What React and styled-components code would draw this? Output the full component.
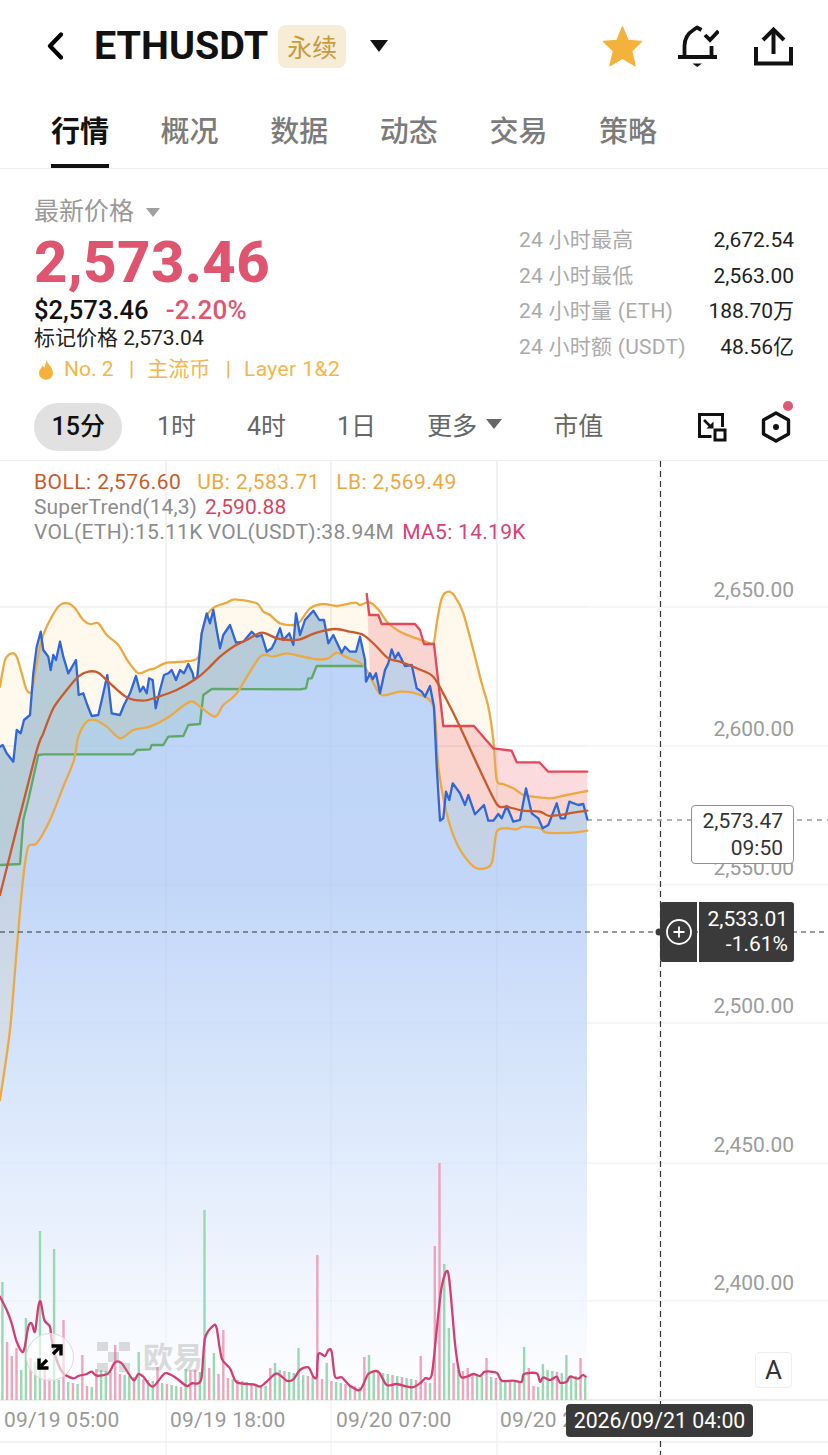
import React from 'react';
import styled, { createGlobalStyle } from 'styled-components';

const CHART_TOP = 461;

const Global = createGlobalStyle`
  html, body { margin: 0; padding: 0; background: #fff; }
  body { font-family: Roboto, "Noto Sans CJK SC", sans-serif; color: #111; }
`;

const Page = styled.div`
  width: 828px; height: 1455px; display: flex; flex-direction: column; overflow: hidden; background: #fff;
`;
const Header = styled.header`
  height: 92px; display: flex; align-items: center; padding: 0 35px 0 47px; box-sizing: border-box;
`;
const Back = styled.svg`width: 16px; height: 28px; margin-right: 31px; flex: none;`;
const Title = styled.h1`margin: 0; font-size: 39.5px; font-weight: 700; letter-spacing: 0; line-height: 1;`;
const Badge = styled.span`
  margin-left: 10px; width: 68px; height: 43px; border-radius: 8px; background: #f7ecd6; color: #c99a3e;
  font-size: 25px; display: flex; align-items: center; justify-content: center;
`;
const Caret = styled.span`
  display: block; width: 0; height: 0; flex: none;
  border-left: ${p => p.$w}px solid transparent; border-right: ${p => p.$w}px solid transparent;
  border-top: ${p => p.$h}px solid ${p => p.$c};
`;
const TitleCaret = styled(Caret)`margin-left: 24px;`;
const HeaderActions = styled.div`margin-left: auto; display: flex; align-items: center; gap: 35px;`;
const TabBar = styled.nav`
  height: 77px; box-sizing: border-box; display: flex; gap: 51.6px; padding-left: 51px; border-bottom: 1px solid #eeeeee;
`;
const Tab = styled.div`
  height: 76px; box-sizing: border-box; font-size: 29px; line-height: 76px; font-weight: ${p => p.$active ? 700 : 500};
  color: ${p => p.$active ? '#111' : '#7b7b7b'}; width: 58px; white-space: nowrap;
  border-bottom: 4px solid ${p => p.$active ? '#111' : 'transparent'};
  & > span { display: block; transform: translateY(2px); }
`;
const Summary = styled.section`
  height: 233px; box-sizing: border-box; display: flex; justify-content: space-between; padding: 28px 34px 0 34px;
`;
const PriceCol = styled.div`display: flex; flex-direction: column;`;
const LastLabel = styled.div`
  display: flex; align-items: center; gap: 12px; font-size: 25px; line-height: 30px; color: #999;
`;
const BigPrice = styled.div`
  font-size: 58px; font-weight: 800; line-height: 66px; color: #df5570; margin-top: 2px; letter-spacing: 0.4px;
`;
const FiatRow = styled.div`display: flex; gap: 17px; font-size: 25.6px; line-height: 30px; font-weight: 500; color: #111;`;
const Change = styled.span`color: #df5570; font-size: 26px; letter-spacing: 0.3px;`;
const Mark = styled.div`font-size: 21px; line-height: 28px; color: #222; margin-top: -1px;`;
const TagRow = styled.div`
  display: flex; align-items: center; font-size: 21px; line-height: 28px; color: #f2b64c; margin-top: 3px; padding-left: 4px;
`;
const Flame = styled.svg`width: 16px; height: 21px; margin-right: 10px; flex: none;`;
const Sep = styled.span`margin: 0 13px 0 15.5px; font-weight: 500;`;
const LayerText = styled.span`letter-spacing: 0.4px;`;
const Stats = styled.div`width: 275px; display: flex; flex-direction: column; margin-top: 26px;`;
const StatRow = styled.div`
  display: flex; justify-content: space-between; height: 35.7px; line-height: 35.7px; font-size: 21px;
`;
const StatKey = styled.span`color: #aaaaaa; letter-spacing: 0.25px;`;
const StatVal = styled.span`color: #222;`;
const Toolbar = styled.div`
  height: 58px; box-sizing: border-box; padding: 1px 34px 9px; display: flex; align-items: center; gap: 18px;
`;
const Interval = styled.div`
  height: 48px; box-sizing: border-box; padding: 0 ${p => p.$active ? 17.5 : 16.5}px 6px; border-radius: 24px; font-size: 25px;
  background: ${p => p.$active ? '#e1e1e1' : 'transparent'};
  color: ${p => p.$active ? '#111' : '#666'};
  font-weight: ${p => p.$active ? 500 : 400};
  display: flex; align-items: center; gap: 9px; white-space: nowrap;
`;
const ToolIcons = styled.div`margin-left: auto; margin-right: 3px; display: flex; align-items: center; gap: 34px; position: relative;`;
const RedDot = styled.span`
  position: absolute; width: 10px; height: 10px; border-radius: 50%; background: #dc5a75; right: -2px; top: -10px;
`;
const Chart = styled.div`
  flex: 1; position: relative; overflow: hidden; border-top: 1px solid #eeeeee; box-sizing: border-box;
`;
const ChartSvg = styled.svg`position: absolute; left: 0; top: 0; display: block;`;
const Legend = styled.div`
  position: absolute; left: 34px; top: ${482 - CHART_TOP - 12}px; font-size: 21px; line-height: 25px; color: #8c8c8c; white-space: nowrap;
`;
const LegendRow = styled.div`display: flex; gap: ${p => p.$gap}px; letter-spacing: ${p => p.$ls}px;`;
const Val = styled.span`color: ${p => p.$c}; margin-left: ${p => p.$ml || 0}px;`;
const AxisLabel = styled.div`
  position: absolute; right: 34px; top: ${p => p.$y - CHART_TOP - 13}px; font-size: 21px; line-height: 26px; color: #9b9b9b;
`;
const DateLabel = styled.div`
  position: absolute; left: ${p => p.$x}px; top: ${1420 - CHART_TOP - 13}px; font-size: 21px; line-height: 26px; color: #999; white-space: nowrap; letter-spacing: 0.2px;
`;
const PriceTag = styled.div`
  position: absolute; left: 691px; top: ${805 - CHART_TOP}px; width: 103px; height: 59px; box-sizing: border-box;
  border: 1px solid #8f8f8f; border-radius: 4px; background: #fff; font-size: 21px; line-height: 27px;
  color: #333; text-align: right; padding: 2px 10px 0 0;
`;
const CrossTag = styled.div`
  position: absolute; left: 660px; top: ${902 - CHART_TOP}px; width: 134px; height: 60px; display: flex; gap: 2px;
`;
const CrossBtn = styled.div`
  width: 37px; background: #3a3a3a; border-radius: 3px 0 0 3px; display: flex; align-items: center; justify-content: center;
`;
const CrossText = styled.div`
  flex: 1; background: #3a3a3a; border-radius: 0 3px 3px 0; color: #fff; font-size: 21px; line-height: 25px;
  text-align: right; padding: 5px 6px 0 0; box-sizing: border-box;
`;
const TimeTag = styled.div`
  position: absolute; left: 566px; top: ${1404 - CHART_TOP}px; width: 187px; height: 33px; background: #3a3a3a; border-radius: 4px;
  color: #fff; font-size: 21.3px; line-height: 33px; text-align: center; white-space: nowrap;
`;
const Expand = styled.div`
  position: absolute; left: 26px; top: ${1333 - CHART_TOP}px; width: 48px; height: 48px; border-radius: 50%; box-sizing: border-box;
  background: rgba(255,255,255,.62); border: 1.5px solid #dcdcdc; display: flex; align-items: center; justify-content: center;
`;
const Watermark = styled.div`
  position: absolute; left: 97px; top: ${1341 - CHART_TOP}px; display: flex; align-items: center; gap: 12px; color: #8f8f8f; opacity: .3;
  font-size: 30px; font-weight: 700; line-height: 34px;
`;
const AutoBtn = styled.div`
  position: absolute; left: 755px; top: ${1352 - CHART_TOP}px; width: 37px; height: 36px; box-sizing: border-box;
  border: 1px solid #eeeeee; border-radius: 4px; font-size: 26px; line-height: 35px; text-align: center; color: #333; background: #fff;
`;

// Points are read off 3x crops of the picture: [origin x, origin y, z-x, z-y, ...]
const z3 = (ox, oy, arr) => {
  const out = [];
  for (let i = 0; i < arr.length; i += 2) out.push([ox + arr[i] / 3, oy + arr[i + 1] / 3]);
  return out;
};
const pts = a => a.map(p => `${p[0].toFixed(1)},${p[1].toFixed(1)}`).join(' ');
// Catmull-Rom through the points, for the lines that are curves in the picture
const smooth = a => {
  let d = `M${a[0][0].toFixed(1)} ${a[0][1].toFixed(1)}`;
  for (let i = 0; i < a.length - 1; i++) {
    const p0 = a[i - 1] || a[i], p1 = a[i], p2 = a[i + 1], p3 = a[i + 2] || p2;
    const k = 0.14;
    d += ` C${(p1[0] + (p2[0] - p0[0]) * k).toFixed(1)} ${(p1[1] + (p2[1] - p0[1]) * k).toFixed(1)} ${(p2[0] - (p3[0] - p1[0]) * k).toFixed(1)} ${(p2[1] - (p3[1] - p1[1]) * k).toFixed(1)} ${p2[0].toFixed(1)} ${p2[1].toFixed(1)}`;
  }
  return d;
};

const price = [
  ...z3(0, 460, [0,860,8,855,20,880,40,905,50,810,62,820,72,780,90,765,100,640,110,560,122,515,130,570,145,590,152,630,160,585,168,600,180,545,190,590,205,640,228,600,236,705,250,700,262,735,275,768,295,765,310,700,322,645,335,760,360,765,372,735,390,700,408,648,420,695,430,680,440,700,447,655,458,660,467,745,480,690,492,645,505,640,515,630,528,660,540,630,552,640,565,612,578,640,582,660,592,650,605,520,620,460,630,490,640,450,650,510,660,565,670,525,690,495,708,548,730,545,755,515,770,530,785,525,800,575,815,565,825,545,840,505,850,540,868,520,880,555,888,460]),
  ...z3(300, 580, [0,165,15,120,40,92,58,120,72,120,85,190,100,165,125,218,135,200,150,215,168,215,180,170,195,240,198,305,210,280,218,298,228,280,240,340,255,270,265,250,275,208,285,235,295,218,315,258,335,255,350,325,365,335,375,350,390,318,402,380,410,560,420,722,430,715,438,635,448,660,458,610,480,640,495,675,505,645,525,703,552,675,565,722,580,722,595,702,605,715,620,678,640,725,660,720,678,625,695,700,715,715,728,745,745,735,770,670,782,715,795,715,808,665,835,675,850,672,862,718]),
];
const upper = [
  ...z3(0, 460, [0,680,15,600,35,580,50,590,65,640,80,690,95,695,105,640,125,540,150,480,180,435,205,430,225,445,250,480,270,492,295,490,320,525,355,555,385,605,415,640,445,630,465,625,500,608,550,605,595,592,605,520,625,460,645,440,680,428,705,418,770,430,790,455,810,465,840,490,880,495]),
  ...z3(300, 580, [0,125,30,85,70,72,110,78,165,68,180,75,200,68,215,70,240,95,265,130,300,155,340,172,370,182,400,190,410,130,425,55,445,35,465,50,490,100,520,210,545,310,565,380,580,480,590,600,610,612,640,625,670,645,700,650,750,655,800,645,862,633]),
];
const lower = [
  ...z3(0, 460, [0,1920,30,1710,50,1470,70,1250,85,1160,110,1150,150,1080,190,980,222,900,235,830,260,785,285,780,320,800,360,835,400,810,450,800,500,775,570,725,600,740,645,770,670,735,710,700,780,590,820,590,860,580]),
  ...z3(300, 580, [0,228,50,238,85,235,110,218,140,232,190,255,215,300,245,345,300,335,345,340,400,378,415,560,440,700,470,790,510,850,540,867,575,850,590,755,620,745,650,748,670,740,720,745,740,758,820,758,862,752]),
];
const mid = [
  ...z3(0, 460, [0,1305,105,890,130,820,160,745,200,690,235,650,265,635,295,638,330,670,380,712,430,722,470,712,530,690,590,655,625,625,660,590,700,560,740,540,785,518,830,535,870,540]),
  ...z3(300, 580, [0,178,50,158,105,147,150,155,190,165,225,195,265,235,300,245,350,265,400,290,440,360,480,440,530,550,590,672,620,680,670,692,720,695,745,707,780,705,820,698,862,692]),
];
const green = [
  ...z3(0, 460, [0,1215,60,1212,70,1080,85,1020,115,885,130,883,400,883,410,870,450,868,455,855,490,855,505,830,550,828,565,795,600,792,610,705,635,687]),
  ...z3(300, 580, [0,328,18,325,25,295,35,295,50,258,190,258]),
];
const red = z3(300, 580, [200,42,208,105,235,105,245,132,345,132,360,150,372,192,402,192,430,438,522,438,545,465,580,505,635,512,650,547,718,547,745,575,862,575]);
const maLine = [
  ...z3(0, 1150, [0,440,20,480,35,520,50,575,70,605,85,530,95,520,105,545,115,470,122,455,133,510,150,530,155,570,170,630,190,670,220,685,235,678,260,672,275,665,290,677,325,670,345,637,365,640,400,690,415,672,430,680,458,710,495,670,525,682,560,708,575,700,595,700,605,680,615,565,640,527,650,535,665,625,690,655,710,697,760,703,780,710,800,695,830,670,860,692,880,688]),
  ...z3(300, 1150, [0,660,25,652,40,680,50,680,55,612,75,618,85,600,95,605,105,680,125,682,150,707,180,720,205,672,235,665,260,705,290,702,335,712,360,700,375,685,395,675,410,540,425,410,445,370,465,580,480,675,500,680,520,672,540,678,555,665,590,668,605,692,640,692,665,695,672,672,710,670,720,695,730,682,750,690,770,680,780,698,800,695,810,680,835,686,848,675,857,680]),
];

const spikes = {
  0:[118,'g'],1:[58,'p'],2:[44,'p'],3:[52,'p'],4:[30,'g'],5:[82,'g'],6:[42,'p'],7:[38,'g'],8:[169,'g'],9:[33,'p'],11:[151,'g'],13:[80,'p'],
  17:[45,'p'],24:[55,'p'],29:[48,'g'],33:[33,'p'],41:[30,'p'],43:[190,'g'],44:[32,'p'],45:[47,'g'],46:[26,'p'],47:[70,'p'],57:[32,'p'],58:[37,'g'],63:[52,'g'],
  67:[145,'p'],69:[37,'g'],77:[43,'p'],78:[45,'g'],89:[44,'p'],92:[154,'p'],93:[237,'p'],94:[136,'g'],95:[72,'g'],96:[37,'p'],99:[32,'p'],103:[42,'p'],111:[53,'g'],112:[32,'p'],115:[36,'g'],120:[45,'g'],123:[42,'p'],
};
const bars = Array.from({ length: 125 }, (_, i) => {
  const s = spikes[i];
  const h = s ? s[0] : 13 + ((i * 37) % 19);
  const k = s ? s[1] : ((i * 7) % 5 < 2 ? 'p' : 'g');
  return { x: 1.2 + i * 4.7, h, k };
});

const GRID_H = [607, 746, 885, 1023, 1163, 1301];
const GRID_V = [166, 331, 497];
const AXIS = [['2,700.00', 451], ['2,650.00', 590], ['2,600.00', 729], ['2,550.00', 868], ['2,500.00', 1006], ['2,450.00', 1145], ['2,400.00', 1283]];
const STATS = [['24 小时最高', '2,672.54'], ['24 小时最低', '2,563.00'], ['24 小时量 (ETH)', '188.70万'], ['24 小时额 (USDT)', '48.56亿']];
const TABS = ['行情', '概况', '数据', '动态', '交易', '策略'];

function ChartDrawing() {
  const bandFill = pts([...upper, ...[...lower].reverse()]);
  const areaFill = pts([[0, 1400], ...price, [587, 820], [587, 1400]]);
  const greenFill = pts([...green, [365, 666], ...price.filter(p => p[0] <= 365).reverse()]);
  const redFill = pts([...red, ...price.filter(p => p[0] >= 367).reverse()]);
  const line = (p, c) => <polyline points={pts(p)} fill="none" stroke={c} strokeWidth="2.3" strokeLinejoin="round" strokeLinecap="round" />;
  const curve = (p, c) => <path d={smooth(p)} fill="none" stroke={c} strokeWidth="2.3" strokeLinejoin="round" strokeLinecap="round" />;
  return (
    <ChartSvg width="828" height="994" viewBox={`0 ${CHART_TOP} 828 994`}>
      <defs>
        <linearGradient id="area" gradientUnits="userSpaceOnUse" x1="0" y1="600" x2="0" y2="1400">
          <stop offset="0" stopColor="#bdd4f8" />
          <stop offset="0.36" stopColor="#c2d7f8" />
          <stop offset="0.69" stopColor="#e0ebfc" />
          <stop offset="0.87" stopColor="#f2f6fe" />
          <stop offset="1" stopColor="#ffffff" />
        </linearGradient>
      </defs>
      {GRID_H.map(y => <line key={y} x1="0" x2="828" y1={y} y2={y} stroke="#f3f3f3" strokeWidth="1.5" />)}
      {GRID_V.map(x => <line key={x} x1={x} x2={x} y1={CHART_TOP} y2="1455" stroke="#f3f3f3" strokeWidth="1.5" />)}
      <polygon points={areaFill} fill="url(#area)" />
      {GRID_H.map(y => <line key={y} x1="0" x2="587" y1={y} y2={y} stroke="#8a96a8" strokeOpacity=".05" strokeWidth="1.5" />)}
      {GRID_V.map(x => <line key={x} x1={x} x2={x} y1={CHART_TOP} y2="1400" stroke="#8a96a8" strokeOpacity=".06" strokeWidth="1.5" />)}
      <line x1="0" x2="828" y1="1400" y2="1400" stroke="#e9e9e9" strokeWidth="1.5" />
      <line x1="0" x2="828" y1="1442" y2="1442" stroke="#eeeeee" strokeWidth="1.5" />
      <polygon points={bandFill} fill="#f4b13c" fillOpacity=".09" />
      <polygon points={greenFill} fill="#4aa35c" fillOpacity=".1" />
      <polygon points={redFill} fill="#ea4a58" fillOpacity=".2" />
      {bars.map(b => <rect key={b.x} x={b.x} y={1400 - b.h} width="2.4" height={b.h} fill={b.k === 'g' ? '#97d9b0' : '#f0a3ba'} />)}
      {line(green, '#5ea968')}
      {curve(upper, '#eca942')}
      {curve(lower, '#eca942')}
      {line(price, '#2f66d8')}
      {line(red, '#e4485a')}
      {curve(mid, '#c95a2e')}
      {curve(maLine, '#d43d72')}
      <line x1="587" x2="828" y1="820" y2="820" stroke="#666" strokeWidth="1.2" strokeDasharray="5 5" />
      <line x1="0" x2="828" y1="932" y2="932" stroke="#333" strokeWidth="1.2" strokeDasharray="5 4" />
      <line x1="660.5" x2="660.5" y1={CHART_TOP} y2="1455" stroke="#333" strokeWidth="1.2" strokeDasharray="6 4" />
      <circle cx="659" cy="932" r="3.5" fill="#3a3a3a" />
    </ChartSvg>
  );
}

export default function App() {
  return (
    <Page>
      <Global />
      <Header>
        <Back viewBox="0 0 16 28"><polyline points="14,2.5 3,14 14,25.5" fill="none" stroke="#000" strokeWidth="4.2" strokeLinecap="round" strokeLinejoin="round" /></Back>
        <Title>ETHUSDT</Title>
        <Badge>永续</Badge>
        <TitleCaret $w={9.5} $h={12} $c="#111" />
        <HeaderActions>
          <svg width="41" height="43" viewBox="0 0 41 43">
            <polygon points="20.5,2 26,15.5 39.5,16.5 29.5,26 33,40.5 20.5,33 8,40.5 11.5,26 1.5,16.5 15,15.5" fill="#f4b23d" stroke="#f4b23d" strokeWidth="1.5" strokeLinejoin="round" />
          </svg>
          <svg width="41" height="45" viewBox="0 0 41 45" fill="none" stroke="#111" strokeWidth="3.8">
            <path d="M0 33 H39" />
            <path d="M6.5 33 V22 C6.5 14 9.5 9.5 16 5.5 L19 3.5 L23.5 6" strokeLinejoin="round" />
            <path d="M33.5 22 V33" />
            <path d="M27 11 L32 16 L40.5 7" />
            <path d="M14.5 39.5 H24 L19.2 43 Z" fill="#111" stroke="none" />
          </svg>
          <svg width="39" height="41" viewBox="0 0 39 41" fill="none" stroke="#111" strokeWidth="4">
            <path d="M2 21 V37.5 H37 V21" />
            <path d="M19.5 28 V4" />
            <path d="M9 14 L19.5 3.5 L30 14" />
          </svg>
        </HeaderActions>
      </Header>
      <TabBar>
        {TABS.map((t, i) => <Tab key={t} $active={i === 0}><span>{t}</span></Tab>)}
      </TabBar>
      <Summary>
        <PriceCol>
          <LastLabel>最新价格 <Caret $w={7} $h={9} $c="#a0a0a0" /></LastLabel>
          <BigPrice>2,573.46</BigPrice>
          <FiatRow>$2,573.46<Change>-2.20%</Change></FiatRow>
          <Mark>标记价格 2,573.04</Mark>
          <TagRow>
            <Flame viewBox="0 0 16 21"><path d="M8.5 0.5 C9 5 15 8 15 14 A7 6.8 0 0 1 1 14 C1 10.5 3.5 9.5 4.5 6.5 C5.5 8 6 8.5 6.5 8.5 C7.5 6 8 3 8.5 0.5 Z" fill="#f4b23d" /></Flame>
            No. 2<Sep>|</Sep>主流币<Sep>|</Sep><LayerText>Layer 1&amp;2</LayerText>
          </TagRow>
        </PriceCol>
        <Stats>
          {STATS.map(([k, v]) => <StatRow key={k}><StatKey>{k}</StatKey><StatVal>{v}</StatVal></StatRow>)}
        </Stats>
      </Summary>
      <Toolbar>
        <Interval $active>15分</Interval>
        <Interval>1时</Interval>
        <Interval>4时</Interval>
        <Interval>1日</Interval>
        <Interval>更多<Caret $w={8} $h={10} $c="#666" /></Interval>
        <Interval>市值</Interval>
        <ToolIcons>
          <svg width="30" height="30" viewBox="0 0 30 30" fill="none" stroke="#111" strokeWidth="3">
            <path d="M14.5 24.5 H2.5 V2.5 H25.5 V15" />
            <rect x="18" y="18" width="10" height="10" />
            <path d="M7 8 L14 15" strokeWidth="2.6" />
            <path d="M16.5 16.5 V9.5 L9.5 16.5 Z" fill="#111" stroke="none" />
          </svg>
          <svg width="30" height="32" viewBox="0 0 30 32" fill="none" stroke="#111" strokeWidth="3.4" strokeLinejoin="round">
            <polygon points="15,2 27.5,9 27.5,23 15,30 2.5,23 2.5,9" />
            <circle cx="15" cy="16" r="3" fill="#111" stroke="none" />
          </svg>
          <RedDot />
        </ToolIcons>
      </Toolbar>
      <Chart>
        <ChartDrawing />
        <Legend>
          <LegendRow $gap={16} $ls={0.45}><Val $c="#c95a2e">BOLL: 2,576.60</Val><Val $c="#eca942">UB: 2,583.71</Val><Val $c="#eca942">LB: 2,569.49</Val></LegendRow>
          <LegendRow $gap={8} $ls={0.1}><span>SuperTrend(14,3)</span><Val $c="#d9445c">2,590.88</Val></LegendRow>
          <LegendRow $gap={5} $ls={0.3}><span>VOL(ETH):15.11K</span><span>VOL(USDT):38.94M</span><Val $c="#d6417a" $ml={3}>MA5: 14.19K</Val></LegendRow>
        </Legend>
        {AXIS.map(([t, y]) => <AxisLabel key={t} $y={y}>{t}</AxisLabel>)}
        <DateLabel $x={4}>09/19 05:00</DateLabel>
        <DateLabel $x={170}>09/19 18:00</DateLabel>
        <DateLabel $x={336}>09/20 07:00</DateLabel>
        <DateLabel $x={500}>09/20 20:00</DateLabel>
        <Watermark>
          <svg width="34" height="32" viewBox="0 0 34 32" fill="#8f8f8f">
            <rect x="0" y="0" width="11" height="9" /><rect x="22" y="0" width="11" height="9" />
            <rect x="11" y="10" width="11" height="10" />
            <rect x="0" y="21" width="11" height="9" /><rect x="22" y="21" width="11" height="9" />
          </svg>
          欧易
        </Watermark>
        <Expand>
          <svg width="28" height="28" viewBox="0 0 28 28" fill="none" stroke="#000" strokeWidth="3.4">
            <path d="M17 11 L25 3" />
            <path d="M15.5 3 H25 V12.5" />
            <path d="M11 17 L3 25" />
            <path d="M3 15.5 V25 H12.5" />
          </svg>
        </Expand>
        <AutoBtn>A</AutoBtn>
        <PriceTag>2,573.47<br />09:50</PriceTag>
        <CrossTag>
          <CrossBtn>
            <svg width="28" height="28" viewBox="0 0 28 28" fill="none" stroke="#fff" strokeWidth="1.8">
              <circle cx="14" cy="14" r="12" />
              <path d="M14 8.5 V19.5 M8.5 14 H19.5" />
            </svg>
          </CrossBtn>
          <CrossText>2,533.01<br />-1.61%</CrossText>
        </CrossTag>
        <TimeTag>2026/09/21 04:00</TimeTag>
      </Chart>
    </Page>
  );
}
